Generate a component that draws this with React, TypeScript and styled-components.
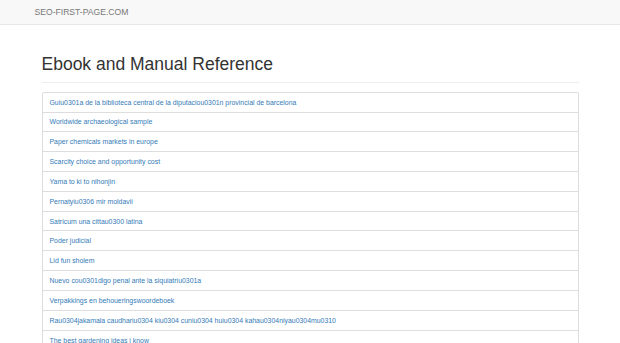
import styled, { createGlobalStyle } from "styled-components";

const GlobalStyle = createGlobalStyle`
    body{
        margin:0;
        background:#fff;
        font-family:"Liberation Sans", Arial, sans-serif;
        color:#333;
    }
`

const Navbar = styled.nav`
    height:24px;
    background-color:#f8f8f8;
    border-bottom:1px solid #e7e7e7;
`

const Container = styled.div`
    max-width:537px;
    margin:0 auto;
`

const NavInner = styled(Container)`
    display:flex;
    align-items:center;
    height:100%;
`

const Brand = styled.a`
    padding:0 7px;
    margin-left:-14px;
    font-size:8.6px;
    color:#777;
    text-decoration:none;
    line-height:24px;
`

const PageHeader = styled.div`
    margin-top:28.5px;
    padding-bottom:8.2px;
    border-bottom:1px solid #eee;
`

const Title = styled.h1`
    margin:0;
    font-size:17.5px;
    font-weight:500;
    line-height:20px;
    color:#333;
`

const ListGroup = styled.div`
    margin-top:9px;
    border:1px solid #ddd;
    border-radius:2px;
    display:flex;
    flex-direction:column;
`

const ListItem = styled.a`
    display:flex;
    align-items:center;
    box-sizing:border-box;
    height:19.83px;
    padding:0 7px;
    font-size:6.92px;
    color:#337ab7;
    text-decoration:none;
    border-bottom:1px solid #ddd;
    &:last-child{
        border-bottom:none;
    }
`

const books = [
    "Guiu0301a de la biblioteca central de la diputaciou0301n provincial de barcelona",
    "Worldwide archaeological sample",
    "Paper chemicals markets in europe",
    "Scarcity choice and opportunity cost",
    "Yama to ki to nihonjin",
    "Pernatyiu0306 mir moldavii",
    "Satricum una cittau0300 latina",
    "Poder judicial",
    "Lid fun sholem",
    "Nuevo cou0301digo penal ante la siquiatriu0301a",
    "Verpakkings en behoueringswoordeboek",
    "Rau0304jakamala caudhariu0304 kiu0304 cuniu0304 huiu0304 kahau0304niyau0304mu0310",
    "The best gardening ideas i know",
]

export default function App(){
    return(
        <>
            <GlobalStyle />
            <Navbar>
                <NavInner>
                    <Brand href="#">SEO-FIRST-PAGE.COM</Brand>
                </NavInner>
            </Navbar>
            <Container>
                <PageHeader>
                    <Title>Ebook and Manual Reference</Title>
                </PageHeader>
                <ListGroup>
                    {books.map((book) => (
                        <ListItem href="#" key={book}>{book}</ListItem>
                    ))}
                </ListGroup>
            </Container>
        </>
    )
}
